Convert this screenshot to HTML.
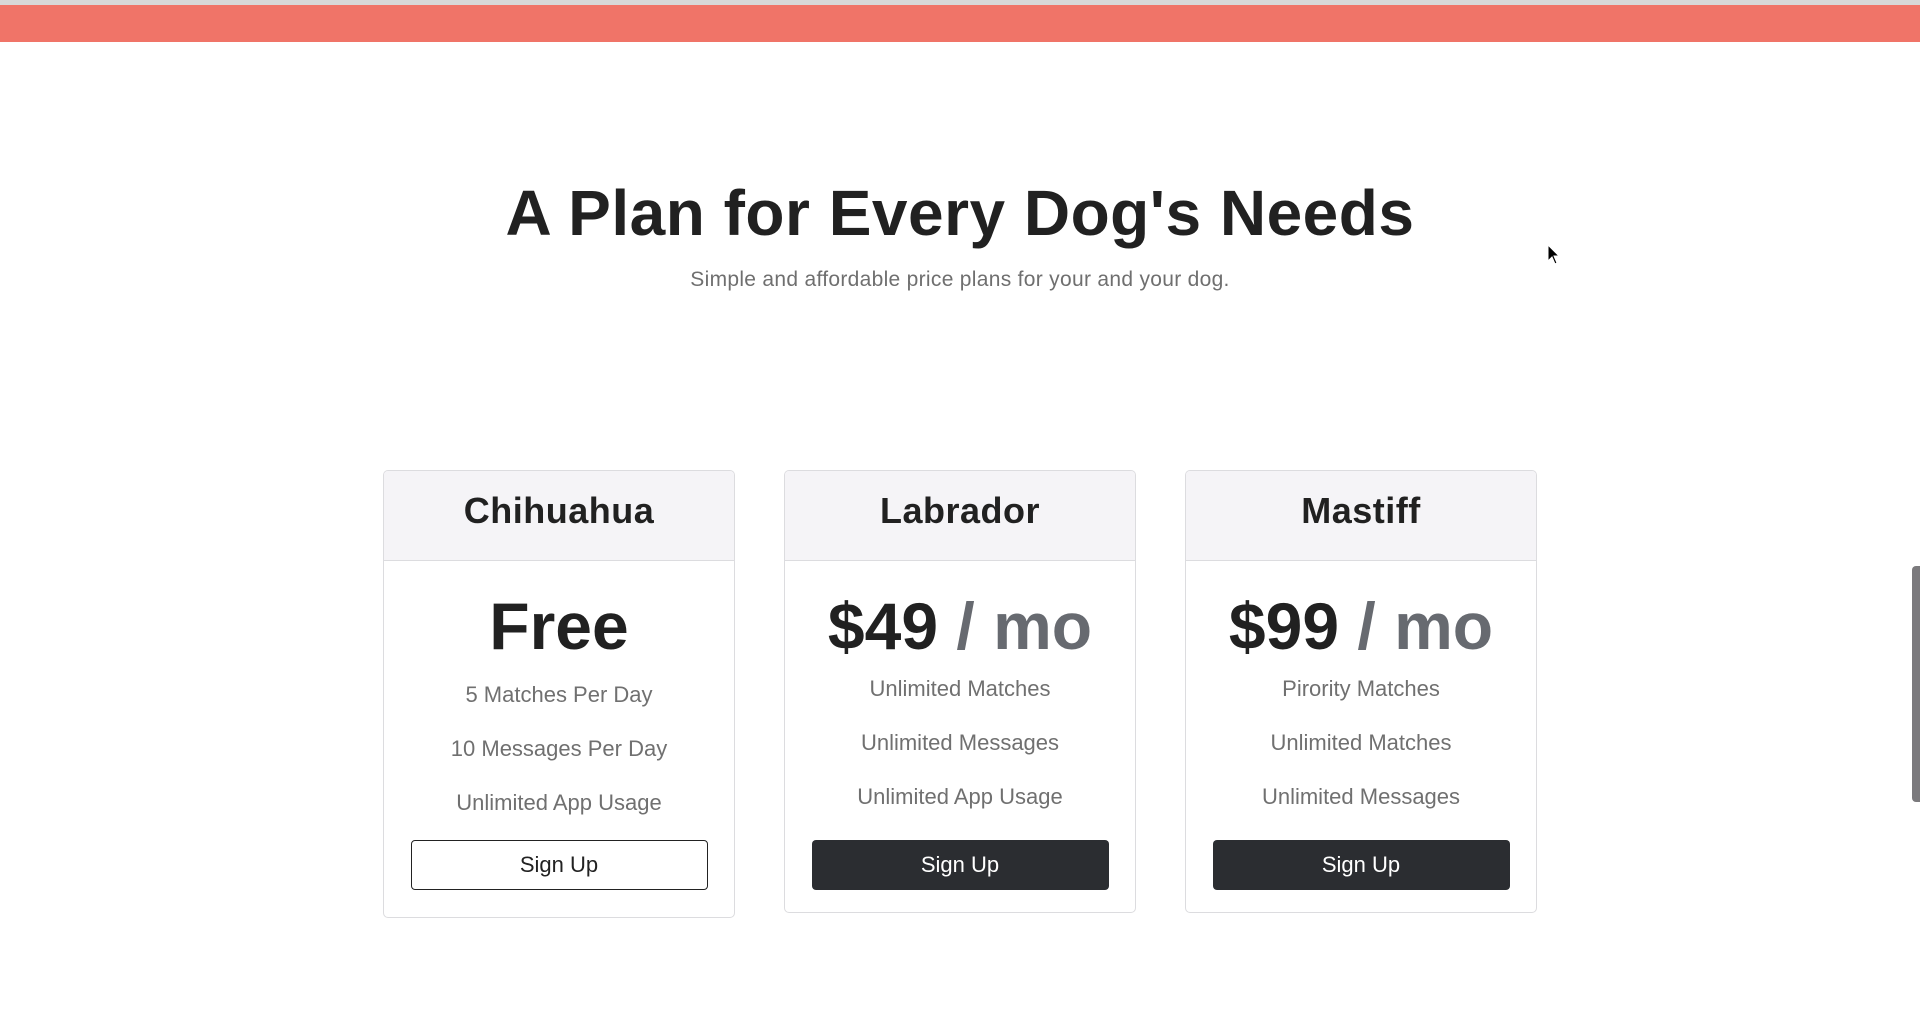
<!DOCTYPE html>
<html><head><meta charset="utf-8"><style>
*{margin:0;padding:0;box-sizing:border-box}
body{width:1920px;height:1015px;background:#fff;font-family:"Liberation Sans",sans-serif;position:relative;overflow:hidden}
.top{position:absolute;left:0;top:0;width:1920px;height:5px;background:#d8d8d8}
.red{position:absolute;left:0;top:5px;width:1920px;height:37px;background:#f07468}
h1{position:absolute;left:0;width:1920px;top:176px;text-align:center;font-size:64px;font-weight:bold;color:#212121;letter-spacing:0.5px}
.sub{position:absolute;left:0;width:1920px;top:268px;text-align:center;font-size:21px;color:#6f6f6f;letter-spacing:0.3px}
.card{position:absolute;top:470px;width:352px;border:1.5px solid #dcdcdf;border-radius:5px;background:#fff;overflow:hidden}
.hd{height:90px;background:#f5f4f7;border-bottom:1.5px solid #dcdcdf;text-align:center;line-height:80px;font-size:36px;font-weight:bold;color:#212121;letter-spacing:0.5px}
.price{text-align:center;font-weight:bold;color:#212121;font-size:66px;line-height:66px}
.price span{color:#676a70}
.f{text-align:center;font-size:22px;color:#707070;height:54px;line-height:54px}
.btn{margin:0 auto;width:297px;height:50px;border-radius:4px;text-align:center;line-height:50px;font-size:22px}
.b1{border:1.5px solid #222;color:#222;line-height:47px}
.b2{background:#2b2d31;color:#fff}
.sb{position:absolute;left:1912px;top:566px;width:8px;height:236px;background:#7b7a7d;border-radius:4px 0 0 4px}
</style></head><body>
<div class="top"></div><div class="red"></div>
<h1>A Plan for Every Dog's Needs</h1>
<div class="sub">Simple and affordable price plans for your and your dog.</div>
<div class="card" style="left:383px;height:448px">
 <div class="hd">Chihuahua</div>
 <div class="price" style="margin-top:32px">Free</div>
 <div class="f" style="margin-top:9px">5 Matches Per Day</div>
 <div class="f">10 Messages Per Day</div>
 <div class="f">Unlimited App Usage</div>
 <div class="btn b1" style="margin-top:10px">Sign Up</div>
</div>
<div class="card" style="left:784px;height:443px">
 <div class="hd">Labrador</div>
 <div class="price" style="margin-top:32px">$49 <span>/ mo</span></div>
 <div class="f" style="margin-top:3px">Unlimited Matches</div>
 <div class="f">Unlimited Messages</div>
 <div class="f">Unlimited App Usage</div>
 <div class="btn b2" style="margin-top:16px">Sign Up</div>
</div>
<div class="card" style="left:1185px;height:443px">
 <div class="hd">Mastiff</div>
 <div class="price" style="margin-top:32px">$99 <span>/ mo</span></div>
 <div class="f" style="margin-top:3px">Pirority Matches</div>
 <div class="f">Unlimited Matches</div>
 <div class="f">Unlimited Messages</div>
 <div class="btn b2" style="margin-top:16px">Sign Up</div>
</div>
<svg style="position:absolute;left:1547px;top:244px" width="14" height="22" viewBox="0 0 14 22"><path d="M1 1 L1 17 L5 13 L8 20 L10 19 L7 12 L12 12 Z" fill="#000" stroke="#fff" stroke-width="1"/></svg>
<div class="sb"></div>
</body></html>
